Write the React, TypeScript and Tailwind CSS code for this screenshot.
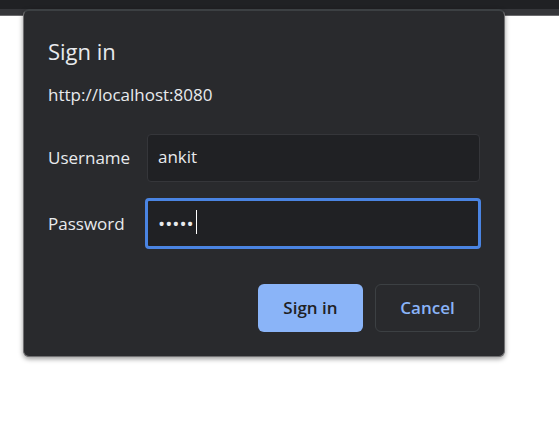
import React from 'react';

export default function App() {
  return (
    <div className="relative min-h-screen bg-white font-['Open_Sans','Noto_Sans',sans-serif] text-[#e8eaed]">
      <header className="h-4 border-t-[9px] border-b border-t-[#202124] border-b-[#6b6b6e] bg-[#35363a]" />
      <div
        role="dialog"
        aria-labelledby="dialog-title"
        className="absolute top-[9px] right-[54px] left-[23px] rounded-md border border-t-2 border-[#707072] border-t-[#3c4043] bg-[#292a2d] px-6 pt-6 pb-6 shadow-[0_2px_5px_rgba(0,0,0,0.4)]"
      >
        <h1 id="dialog-title" className="text-[22px] leading-8">
          Sign in
        </h1>
        <p className="mt-4 text-[17px] leading-6">http://localhost:8080</p>
        <form className="mt-[27px]" onSubmit={(event) => event.preventDefault()}>
          <div className="grid grid-cols-[99px_1fr] items-center gap-y-4 text-[17px] leading-6">
            <label htmlFor="username">Username</label>
            <input
              id="username"
              type="text"
              defaultValue="ankit"
              className="h-12 w-full min-w-0 rounded-sm border border-[#35363a] bg-[#202124] px-[10px] pb-1 outline-none"
            />
            <label htmlFor="password">Password</label>
            <div className="relative -ml-0.5 -mr-px">
              <input
                id="password"
                type="password"
                defaultValue="ankit"
                className="block h-[51px] w-full rounded border-[3px] border-[#4a84e2] bg-[#202124] px-[10px] text-[19px] caret-transparent outline-none"
              />
              <span aria-hidden="true" className="absolute top-3 left-[51px] h-6 w-px bg-white" />
            </div>
          </div>
          <div className="mt-[35px] flex justify-end gap-3 text-[17px] leading-6 font-semibold">
            <button type="submit" className="h-12 w-[105px] rounded-md bg-[#8ab4f8] text-[#202124]">
              Sign in
            </button>
            <button type="button" className="h-12 w-[105px] rounded-md border border-[#3c4043] text-[#8ab4f8]">
              Cancel
            </button>
          </div>
        </form>
      </div>
    </div>
  );
}
